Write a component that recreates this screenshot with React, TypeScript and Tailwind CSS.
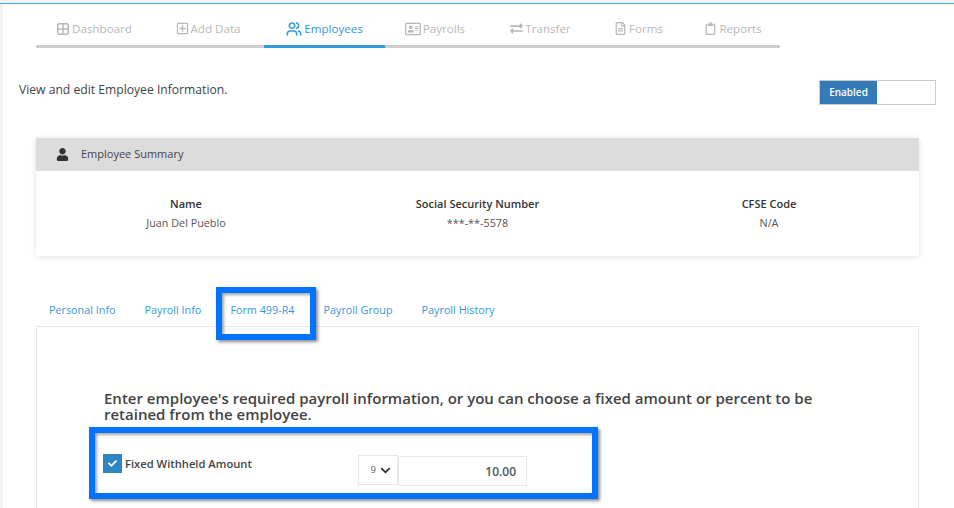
import { Grid2x2 } from "lucide-react";
import {
  FaCheck,
  FaChevronDown,
  FaExchangeAlt,
  FaRegAddressCard,
  FaRegClipboard,
  FaRegFileAlt,
  FaRegPlusSquare,
  FaUser,
} from "react-icons/fa";
import { LuUsers } from "react-icons/lu";

const navItems = [
  { label: "Dashboard", icon: <Grid2x2 size={14} strokeWidth={2.6} />, width: "w-[116px] mr-[4px]" },
  { label: "Add Data", icon: <FaRegPlusSquare size={13} />, width: "w-[104px] mr-[4px]" },
  { label: "Employees", icon: <LuUsers size={16} strokeWidth={2.4} />, width: "w-[121px]", active: true },
  { label: "Payrolls", icon: <FaRegAddressCard size={16} />, width: "w-[100px]" },
  { label: "Transfer", icon: <FaExchangeAlt size={13} />, width: "w-[111px]" },
  { label: "Forms", icon: <FaRegFileAlt size={13} />, width: "w-[85px]" },
  { label: "Reports", icon: <FaRegClipboard size={13} />, width: "w-[104px]" },
];

const tabs = ["Personal Info", "Payroll Info", "Form 499-R4", "Payroll Group", "Payroll History"];

const summary = [
  { title: "Name", value: "Juan Del Pueblo", width: "w-[300px]" },
  { title: "Social Security Number", value: "***-**-5578", width: "w-[283px]" },
  { title: "CFSE Code", value: "N/A", width: "flex-1" },
];

export default function App() {
  return (
    <div className="relative h-[508px] w-[954px] overflow-hidden bg-white font-['Open_Sans',sans-serif] text-[#444]">
      <div className="h-[4px] border-b border-[#5a9fd0] bg-[#eef2f6]" />
      <div className="flex h-[504px] flex-col border-l-[3px] border-[#f1f3f8] pr-[2px]">
        {/* Top nav */}
        <div className="ml-[33px] mt-[13px] flex h-[31px] w-[744px] border-b-[3px] border-[#cfcfcf]">
          {navItems.map((item) => (
            <div
              key={item.label}
              className={`-mb-[3px] flex h-[31px] shrink-0 items-center justify-center gap-[2px] border-b-[3px] pb-[5px] text-[11.6px] ${item.width} ${
                item.active ? "border-[#3498db] text-[#3498db]" : "border-transparent text-[#b8b8b8]"
              }`}
            >
              {item.icon}
              <span>{item.label}</span>
            </div>
          ))}
        </div>

        {/* Intro */}
        <div className="relative mt-[32px] flex h-[26px] items-start justify-between pl-[16px] pr-[16px]">
          <p className="text-[12.15px] leading-[20px] text-[#444]">View and edit Employee Information.</p>
          <div className="flex h-[25px] w-[117px] border border-[#cccccc]">
            <div className="flex w-[57px] items-center justify-center bg-[#337ab7] text-[10px] font-semibold text-white">
              Enabled
            </div>
          </div>
        </div>

        {/* Employee summary card */}
        <div className="ml-[33px] mt-[32px] w-[883px] shadow-[0_1px_6px_rgba(0,0,0,0.12)]">
          <div className="flex h-[33px] items-center bg-[#dcdcdc] pl-[20px] text-[11px]">
            <FaUser size={13} className="text-[#333]" />
            <span className="ml-[12px] text-[#444]">Employee Summary</span>
          </div>
          <div className="flex h-[85px] pt-[23px] text-center text-[10.8px] leading-[19px]">
            {summary.map((col) => (
              <div key={col.title} className={col.width}>
                <div className="text-[11px] font-semibold text-[#333]">{col.title}</div>
                <div className="text-[#555]">{col.value}</div>
              </div>
            ))}
          </div>
        </div>

        {/* Tabs */}
        <div className="ml-[33px] mt-[44px] flex h-[26px] gap-[2px] text-[10.8px] text-[#3498db]">
          {tabs.map((tab) => (
            <div key={tab} className="flex h-[26px] items-center pb-[5px] pl-[13px] pr-[14px]">
              {tab}
            </div>
          ))}
        </div>
        <div className="ml-[33px] w-[883px] flex-1 border-l border-r border-t border-[#e8e8e8] pl-[66px] pt-[63px]">
          <h2 className="ml-[1px] w-[730px] text-[15px] font-semibold leading-[16px] text-[#444]">
            Enter employee's required payroll information, or you can choose a fixed amount or percent to be retained
            from the employee.
          </h2>
          <div className="mt-[33px] flex items-start">
            <div className="mt-[-1px] flex h-[19px] w-[19px] items-center justify-center bg-[#2e86c1] text-white">
              <FaCheck size={9} />
            </div>
            <label className="ml-[3px] w-[233px] text-[11.2px] font-semibold leading-[18px] text-[#444]">
              Fixed Withheld Amount
            </label>
            <div className="flex h-[30px] w-[40px] items-center justify-end gap-[4px] border border-[#e8e8e8] pr-[6px] text-[9px] text-[#555]">
              <span>9</span>
              <FaChevronDown size={11} className="text-[#333]" />
            </div>
            <div className="mt-[1px] flex h-[30px] w-[129px] items-center justify-end border border-[#e8e8e8] pr-[10px] pt-[1px] text-[12px] font-semibold text-[#555]">
              10.00
            </div>
          </div>
        </div>
      </div>

      {/* Annotation boxes drawn over the screenshot */}
      <div className="absolute left-[216px] top-[287px] h-[53px] w-[100px] border-[6px] border-[#0073ff] shadow-[2px_2px_3px_rgba(0,0,0,0.45),inset_2px_2px_3px_rgba(0,0,0,0.35)]" />
      <div className="absolute left-[89px] top-[427px] h-[72px] w-[509px] border-[6px] border-[#0073ff] shadow-[2px_2px_3px_rgba(0,0,0,0.45),inset_2px_2px_3px_rgba(0,0,0,0.35)]" />
    </div>
  );
}
